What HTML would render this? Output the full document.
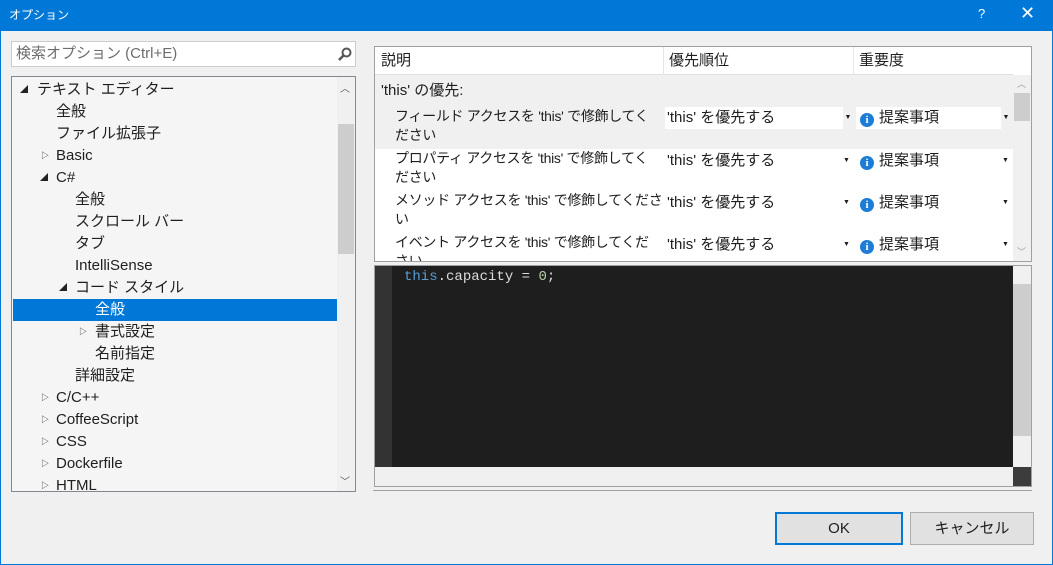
<!DOCTYPE html>
<html><head><meta charset="utf-8"><style>
*{box-sizing:border-box;margin:0;padding:0}
body{width:1053px;height:565px;overflow:hidden;background:#f0f0f0;font-family:"Segoe UI","Liberation Sans","Noto Sans CJK JP",sans-serif;font-size:15px;color:#1e1e1e;position:relative}
.abs{position:absolute}
#win{position:absolute;left:0;top:0;width:1053px;height:565px;border:1px solid #0078d7;border-top:none}
#title{position:absolute;left:0;top:0;width:1053px;height:31px;background:#0078d7;color:#fff;font-size:12px;line-height:31px;padding-left:9px}
.ti{position:absolute;line-height:22px;white-space:nowrap}
.ar{position:absolute;font-size:8px;line-height:22px;color:#222}
.row{position:absolute;left:375px;width:638px;height:42px}
.cell{position:absolute;line-height:20px;white-space:nowrap}
.desc{position:absolute;left:20px;top:1px;width:268px;height:41px;overflow:hidden;font-size:14px;line-height:19px;white-space:nowrap;letter-spacing:-0.3px}
.dd{position:absolute;background:#fff;height:22px;line-height:22px}
.info{display:inline-block;width:14px;height:14px;border-radius:50%;background:#1c7cd6;color:#fff;font:bold 11px/14px "Liberation Serif",serif;text-align:center;vertical-align:-1px;margin-right:5px}
.btn{position:absolute;top:512px;height:33px;background:#e1e1e1;border:1px solid #adadad;text-align:center;line-height:31px;font-size:15px}
</style></head><body>
<div id="win"></div>
<div id="title">オプション</div>
<div class="abs" style="left:978px;top:6px;color:#fff;font-size:13px">?</div>
<div class="abs" style="left:1020px;top:3px;color:#fff;font-size:18px">✕</div>

<div class="abs" style="left:11px;top:41px;width:345px;height:26px;background:#fff;border:1px solid #ccc;color:#6d6d6d;line-height:24px;padding-left:4px;font-size:15px">検索オプション (Ctrl+E)</div>
<svg class="abs" style="left:338px;top:47px" width="14" height="14"><circle cx="8.5" cy="5.5" r="4" fill="none" stroke="#555" stroke-width="2"/><line x1="5.5" y1="8.5" x2="1" y2="13" stroke="#555" stroke-width="2.5"/></svg>

<div class="abs" style="left:11px;top:76px;width:345px;height:416px;background:#f5f5f5;border:1px solid #828790;overflow:hidden">
<div class="abs" style="left:325px;top:0;width:18px;height:414px;background:#f0f0f0"></div>
<div class="abs" style="left:326px;top:47px;width:16px;height:130px;background:#cdcdcd"></div>
<div class="abs" style="left:328px;top:3px;font-size:10px;color:#555">︿</div>
<div class="abs" style="left:328px;top:396px;font-size:10px;color:#555">﹀</div>
<div class="abs" style="left:1px;top:222px;width:324px;height:22px;background:#0078d7"></div>
</div>
<div class="ar" style="left:20px;top:79px">◢</div><div class="ti" style="left:37px;top:79px">テキスト エディター</div>
<div class="ti" style="left:56px;top:101px">全般</div>
<div class="ti" style="left:56px;top:123px">ファイル拡張子</div>
<div class="ar" style="left:41px;top:145px">▷</div><div class="ti" style="left:56px;top:145px">Basic</div>
<div class="ar" style="left:40px;top:167px">◢</div><div class="ti" style="left:56px;top:167px">C#</div>
<div class="ti" style="left:75px;top:189px">全般</div>
<div class="ti" style="left:75px;top:211px">スクロール バー</div>
<div class="ti" style="left:75px;top:233px">タブ</div>
<div class="ti" style="left:75px;top:255px">IntelliSense</div>
<div class="ar" style="left:59px;top:277px">◢</div><div class="ti" style="left:75px;top:277px">コード スタイル</div>
<div class="ti" style="left:95px;top:299px;color:#fff">全般</div>
<div class="ar" style="left:79px;top:321px">▷</div><div class="ti" style="left:95px;top:321px">書式設定</div>
<div class="ti" style="left:95px;top:343px">名前指定</div>
<div class="ti" style="left:75px;top:365px">詳細設定</div>
<div class="ar" style="left:41px;top:387px">▷</div><div class="ti" style="left:56px;top:387px">C/C++</div>
<div class="ar" style="left:41px;top:409px">▷</div><div class="ti" style="left:56px;top:409px">CoffeeScript</div>
<div class="ar" style="left:41px;top:431px">▷</div><div class="ti" style="left:56px;top:431px">CSS</div>
<div class="ar" style="left:41px;top:453px">▷</div><div class="ti" style="left:56px;top:453px">Dockerfile</div>
<div class="abs" style="left:12px;top:476px;width:324px;height:15px;overflow:hidden"><div class="ar" style="left:29px;top:-1px">▷</div><div class="ti" style="left:44px;top:-1px">HTML</div></div>

<div class="abs" style="left:374px;top:46px;width:658px;height:216px;background:#fff;border:1px solid #a0a0a0;overflow:hidden">
<div class="abs" style="left:0;top:0;width:638px;height:28px;background:#fff;border-bottom:1px solid #e0e0e0"></div>
<div class="abs" style="left:288px;top:0;width:1px;height:28px;background:#e5e5e5"></div>
<div class="abs" style="left:478px;top:0;width:1px;height:28px;background:#e5e5e5"></div>
<div class="cell" style="left:6px;top:4px">説明</div>
<div class="cell" style="left:294px;top:4px">優先順位</div>
<div class="cell" style="left:484px;top:4px">重要度</div>
<div class="abs" style="left:0;top:28px;width:638px;height:74px;background:#f0f0f0"></div>
<div class="abs" style="left:638px;top:28px;width:18px;height:188px;background:#f0f0f0"></div>
<div class="abs" style="left:639px;top:46px;width:16px;height:28px;background:#cdcdcd"></div>
<div class="abs" style="left:642px;top:30px;font-size:9px;color:#999">︿</div>
<div class="abs" style="left:642px;top:198px;font-size:9px;color:#999">﹀</div>
<div class="cell" style="left:6px;top:34px">'this' の優先:</div>
</div>
<div class="row" style="top:106px"><div class="desc">フィールド アクセスを 'this' で修飾してく<br>ださい</div></div>
<div class="row" style="top:148px"><div class="desc">プロパティ アクセスを 'this' で修飾してく<br>ださい</div></div>
<div class="row" style="top:190px"><div class="desc">メソッド アクセスを 'this' で修飾してくださ<br>い</div></div>
<div class="abs" style="left:375px;top:232px;width:638px;height:29px;overflow:hidden"><div class="desc">イベント アクセスを 'this' で修飾してくだ<br>さい</div></div>
<div class="dd" style="left:665px;top:107px;width:188px"><span style="padding-left:2px">'this' を優先する</span><span class="abs" style="right:0;width:10px;background:#f0f0f0;height:22px;font-size:7px;text-align:center">▼</span></div>
<div class="dd" style="left:856px;top:107px;width:155px"><span style="padding-left:4px"><span class="info">i</span>提案事項</span><span class="abs" style="right:0;width:10px;background:#f0f0f0;height:22px;font-size:7px;text-align:center">▼</span></div>
<div class="cell" style="left:667px;top:150px;line-height:22px">'this' を優先する</div><div class="abs" style="left:843px;top:150px;font-size:7px;line-height:22px">▼</div>
<div class="cell" style="left:860px;top:150px;line-height:22px"><span class="info">i</span>提案事項</div><div class="abs" style="left:1002px;top:150px;font-size:7px;line-height:22px">▼</div>
<div class="cell" style="left:667px;top:192px;line-height:22px">'this' を優先する</div><div class="abs" style="left:843px;top:192px;font-size:7px;line-height:22px">▼</div>
<div class="cell" style="left:860px;top:192px;line-height:22px"><span class="info">i</span>提案事項</div><div class="abs" style="left:1002px;top:192px;font-size:7px;line-height:22px">▼</div>
<div class="cell" style="left:667px;top:234px;line-height:22px">'this' を優先する</div><div class="abs" style="left:843px;top:234px;font-size:7px;line-height:22px">▼</div>
<div class="cell" style="left:860px;top:234px;line-height:22px"><span class="info">i</span>提案事項</div><div class="abs" style="left:1002px;top:234px;font-size:7px;line-height:22px">▼</div>

<div class="abs" style="left:374px;top:265px;width:658px;height:222px;background:#f0f0f0;border:1px solid #a0a0a0;overflow:hidden">
<div class="abs" style="left:0;top:0;width:17px;height:201px;background:#333"></div>
<div class="abs" style="left:17px;top:0;width:621px;height:201px;background:#1e1e1e"></div>
<div class="abs" style="left:638px;top:18px;width:18px;height:152px;background:#cdcdcd"></div>
<div class="abs" style="left:638px;top:201px;width:18px;height:19px;background:#3c3c3c"></div>
<div class="abs" style="left:29px;top:1px;font:14px/20px 'Liberation Mono',monospace;color:#dcdcdc"><span style="color:#569cd6">this</span>.capacity = <span style="color:#b5cea8">0</span>;</div>
</div>
<div class="abs" style="left:373px;top:490px;width:659px;height:1px;background:#a0a0a0"></div>

<div class="btn" style="left:775px;width:128px;border:2px solid #0078d7;line-height:29px">OK</div>
<div class="btn" style="left:910px;width:124px">キャンセル</div>
</body></html>
